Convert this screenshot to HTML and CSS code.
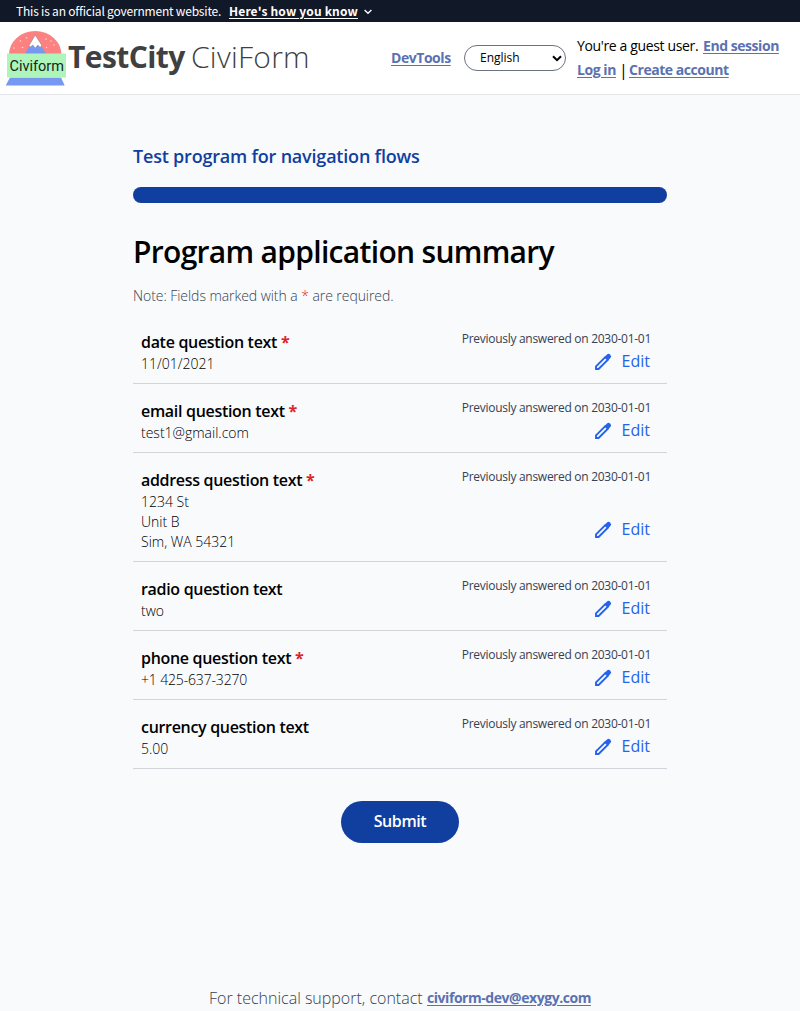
FILE: index.html
```
<!DOCTYPE html>
<html lang="en">
<head>
<meta charset="utf-8">
<title>Program application summary</title>
<link rel="stylesheet" href="styles.css">
</head>
<body>
<svg class="sprite" width="0" height="0">
  <symbol id="pencil" viewBox="0 0 20 20"><path d="M12.300 5.100L3 14.400V17h2.600l9.300-9.300z" fill="none" stroke="currentColor" stroke-width="1.900"/><path d="M11.400 5.200l2.600-2.600a2.200 2.200 0 0 1 3.100 0l.3.300a2.200 2.200 0 0 1 0 3.100l-2.600 2.600z"/></symbol>
</svg>
<div class="banner">
  <span class="banner-text">This is an official government website.</span>
  <a class="banner-link">Here's how you know</a>
  <svg class="chevron" viewBox="0 0 8 6"><path d="M.6 1l3.400 3.300L7.400 1" fill="none" stroke="#fff" stroke-width="1.300"/></svg>
</div>
<header class="header">
  <div class="brand">
    <svg class="logo" viewBox="0 0 62 58">
      <path d="M3 24.500a26.200 23.500 0 0 1 52.400 0z" fill="#fc8181"/>
      <path d="M18.500 24.500L29 6l11.500 18.500z" fill="#7698f0"/>
      <path d="M29.200 5L23 15.500l1.500 1.500 2.300-2 2.400 3.200 2.600-3.200 2.400 2.500 1.500-2.300z" fill="#fff" stroke="#8f8790" stroke-width=".6"/>
      <g fill="#fed7d7"><circle cx="8" cy="18" r=".8"/><circle cx="14.500" cy="11" r=".8"/><circle cx="16.500" cy="17.500" r=".8"/><circle cx="20.500" cy="8" r=".8"/><circle cx="40" cy="9" r=".8"/><circle cx="40.500" cy="17.500" r=".8"/><circle cx="45" cy="11" r=".8"/><circle cx="48" cy="15" r=".8"/></g>
      <path d="M4 47.500h51L58.700 55.500H-.300z" fill="#7698f0"/>
      <path d="M1 23.500h59v24H1z" fill="#adf5bb"/>
      <text class="logo-text" x="3.500" y="41.300" textLength="54.500" lengthAdjust="spacingAndGlyphs">Civiform</text>
    </svg>
    <div class="brand-name"><b>TestCity</b><span>CiviForm</span></div>
  </div>
  <div class="tools">
    <a class="link devtools">DevTools</a>
    <div class="language"><span>English</span><svg viewBox="0 0 10 7"><path d="M1 1.200l4 4 4-4" fill="none" stroke="#000" stroke-width="2"/></svg></div>
    <div class="account">
      <div><span class="guest">You're a guest user.</span><a class="link end">End session</a></div>
      <div><span class="login"><a class="link">Log in</a></span><span class="bar">|</span><a class="link create">Create account</a></div>
    </div>
  </div>
</header>
<main class="main">
  <h2 class="program">Test program for navigation flows</h2>
  <div class="progress"></div>
  <h1 class="title">Program application summary</h1>
  <p class="note">Note: Fields marked with a <span class="req">*</span> are required.</p>
  <div class="row"><div class="question"><h3>date question text <span class="req">*</span></h3><p>11/01/2021</p></div><div class="side"><span class="previous">Previously answered on 2030-01-01</span><a class="edit"><svg><use href="#pencil"/></svg>Edit</a></div></div>
  <div class="row"><div class="question"><h3>email question text <span class="req">*</span></h3><p>test1@gmail.com</p></div><div class="side"><span class="previous">Previously answered on 2030-01-01</span><a class="edit"><svg><use href="#pencil"/></svg>Edit</a></div></div>
  <div class="row row-tall"><div class="question"><h3>address question text <span class="req">*</span></h3><p>1234 St<br>Unit B<br>Sim, WA 54321</p></div><div class="side"><span class="previous">Previously answered on 2030-01-01</span><a class="edit"><svg><use href="#pencil"/></svg>Edit</a></div></div>
  <div class="row"><div class="question"><h3>radio question text</h3><p>two</p></div><div class="side"><span class="previous">Previously answered on 2030-01-01</span><a class="edit"><svg><use href="#pencil"/></svg>Edit</a></div></div>
  <div class="row"><div class="question"><h3>phone question text <span class="req">*</span></h3><p class="phone">+1 425-637-3270</p></div><div class="side"><span class="previous">Previously answered on 2030-01-01</span><a class="edit"><svg><use href="#pencil"/></svg>Edit</a></div></div>
  <div class="row"><div class="question"><h3>currency question text</h3><p>5.00</p></div><div class="side"><span class="previous">Previously answered on 2030-01-01</span><a class="edit"><svg><use href="#pencil"/></svg>Edit</a></div></div>
  <button class="submit">Submit</button>
</main>
<footer class="footer"><span class="support">For technical support, contact</span><a class="link mail">civiform-dev@exygy.com</a></footer>
</body>
</html>
```
FILE: styles.css
```
* { box-sizing: border-box; }
body { margin: 0; height: 1011px; overflow: hidden; display: flex; flex-direction: column; background: #f8fafc; color: #000; font-family: "Open Sans", "Noto Sans", sans-serif; font-size: 14px; line-height: 20px; white-space: nowrap; }
h1, h2, h3, p { margin: 0; font-weight: 600; }
.sprite { position: absolute; }
.banner { height: 22px; flex: none; display: flex; align-items: center; padding-left: 16px; background: #111827; color: #fff; font: 12px/22px "Noto Sans CJK SC", sans-serif; }
.banner-text { width: 213px; letter-spacing: -.2px; }
.banner-link { width: 129px; font-weight: 700; text-decoration: underline; text-underline-offset: 2px; letter-spacing: .16px; }
.chevron { width: 8px; height: 6px; margin-left: 6px; margin-top: 2px; }
.header { height: 73px; flex: none; display: flex; justify-content: space-between; background: #fff; border-bottom: 1px solid #e5e7eb; }
.brand { display: flex; padding: 8px 0 0 6px; }
.logo { width: 62px; height: 58px; overflow: visible; }
.logo-text { font: 14px "Roboto", sans-serif; fill: #17251b; }
.brand-name { display: flex; color: #404040; font-size: 30px; line-height: 36px; padding-top: 9px; }
.brand-name b { width: 123px; font-weight: 700; letter-spacing: -.6px; }
.brand-name span { font-weight: 300; letter-spacing: .25px; }
.tools { display: flex; align-items: center; width: 409px; }
.link { color: #5b71b1; font-weight: 700; text-decoration: underline; text-underline-offset: 2px; letter-spacing: -.45px; }
.devtools { width: 73px; }
.language { width: 102px; height: 26px; border: 1px solid #6b7280; border-radius: 13px; display: flex; justify-content: space-between; align-items: center; padding: 0 3px 0 15px; font-size: 12px; }
.language svg { width: 10px; height: 7px; }
.account { margin-left: 11px; line-height: 24px; }
.account div { display: flex; }
.guest { width: 126px; letter-spacing: -.36px; }
.login { width: 42px; }
.bar { width: 10px; font-size: 16px; }
.main { width: 534px; margin: 0 auto; padding-top: 47px; display: flex; flex-direction: column; flex: 1; }
.program { color: #113f9f; font-size: 18px; line-height: 28px; letter-spacing: -.2px; }
.progress { height: 16px; margin-top: 17px; border-radius: 8px; background: #113f9f; flex: none; }
.title { margin-top: 31px; font-size: 30px; line-height: 36px; letter-spacing: -.69px; }
.note { margin: 16px 0 9px; color: #374151; font-weight: 300; letter-spacing: -.06px; }
.req { color: #dc2626; }
.row { display: flex; justify-content: space-between; padding: 15px 16px 9px 8px; border-bottom: 1px solid #d1d5db; }
.question h3 { font-size: 16px; line-height: 24px; letter-spacing: -.31px; }
.question h3 .req { font-weight: 700; }
.question p { font-weight: 300; color: #000; letter-spacing: 0; }
.question .phone { letter-spacing: -.16px; }
.side { display: flex; flex-direction: column; justify-content: space-between; align-items: flex-end; padding-top: 1px; }
.previous { font-size: 12px; line-height: 16px; color: #374151; letter-spacing: -.28px; }
.edit { display: flex; align-items: center; font-size: 16px; line-height: 24px; color: #2563eb; margin: 0 1px 1px 0; }
.row-tall .edit { margin-bottom: 11px; }
.edit svg { width: 20px; height: 20px; margin-right: 9px; margin-top: 1px; fill: currentColor; }
.submit { align-self: center; width: 118px; height: 42px; margin-top: 32px; padding: 0 0 2px; border: 0; border-radius: 21px; background: #113f9f; color: #fff; font: 600 16px/24px "Open Sans", sans-serif; letter-spacing: -.4px; }
.footer { height: 25px; flex: none; display: flex; margin-left: 209px; line-height: 24px; }
.support { width: 218px; font-size: 16px; font-weight: 300; color: #374151; }
```
